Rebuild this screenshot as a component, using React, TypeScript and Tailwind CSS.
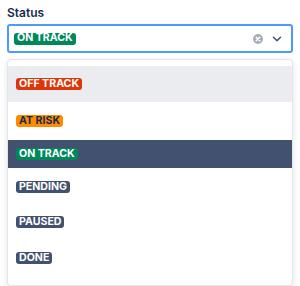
import { ChevronDown } from 'lucide-react'

type Option = { label: string; tone: string; h: string }

const OPTIONS: Option[] = [
  { label: 'Off track', tone: 'bg-[#de350b] text-white', h: 'h-[36px]' },
  { label: 'At risk', tone: 'bg-[#ff8b00] text-[#172b4d]', h: 'h-[38px]' },
  { label: 'On track', tone: 'bg-[#00875a] text-white', h: 'h-[28px]' },
  { label: 'Pending', tone: 'bg-[#42526e] text-white', h: 'h-[38px]' },
  { label: 'Paused', tone: 'bg-[#42526e] text-white', h: 'h-[32px]' },
  { label: 'Done', tone: 'bg-[#42526e] text-white', h: 'h-[40px]' },
]

function Lozenge({ label, tone }: { label: string; tone: string }) {
  return (
    <span
      className={`inline-flex h-[12px] items-center rounded-[3px] px-[3px] text-[10.6px] font-bold uppercase leading-none ${tone}`}
    >
      {label}
    </span>
  )
}

export default function App() {
  const hovered = 0
  const selected = 2

  return (
    <div className="h-[286px] w-[300px] overflow-hidden bg-white px-[7px] pt-[6px] font-['Inter',sans-serif] text-[#172b4d]">
      <label className="block text-[12px] font-semibold leading-[14px] text-[#172b4d]">Status</label>

      {/* Select control */}
      <div className="mt-[4px] flex h-[29px] items-center rounded-[3px] border-2 border-[#4c9aff] bg-white pl-[5px] pr-[7px]">
        <Lozenge label="On track" tone="bg-[#00875a] text-white" />
        <div className="ml-auto flex items-center gap-[7px]">
          <svg width="10" height="10" viewBox="0 0 10 10">
            <circle cx="5" cy="5" r="5" fill="#a5adba" />
            <path d="M3.2 3.2 L6.8 6.8 M6.8 3.2 L3.2 6.8" stroke="#fff" strokeWidth="1.5" strokeLinecap="round" />
          </svg>
          <ChevronDown className="h-[14px] w-[14px] text-[#42526e]" strokeWidth={2.6} />
        </div>
      </div>

      <div className="relative">
        {/* Helper text, mostly hidden by the open menu */}
        <p className="ml-[6px] mt-[231px] text-[12px] leading-[14px] text-[#172b4d]">
          Use a status to show how the project is tracking.
        </p>

        {/* Dropdown menu */}
        <div className="absolute left-0 right-0 top-[-225px] rounded-[4px] border border-[#e4e6ea] bg-white pb-[7px] pt-[6px] shadow-[0_2px_6px_rgba(9,30,66,0.12)]">
          {OPTIONS.map((o, i) => (
            <div
              key={o.label}
              className={`flex items-center pl-[8px] ${o.h} ${
                i === selected ? 'bg-[#42526e]' : i === hovered ? 'bg-[#ebecf0]' : 'bg-white'
              }`}
            >
              <Lozenge label={o.label} tone={o.tone} />
            </div>
          ))}
        </div>
      </div>
    </div>
  )
}
